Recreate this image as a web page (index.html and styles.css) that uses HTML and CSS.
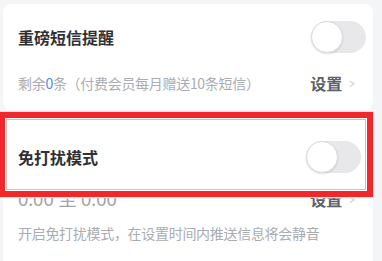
FILE: index.html
```html
<!DOCTYPE html>
<html lang="zh-CN">
<head>
<meta charset="utf-8">
<link rel="stylesheet" href="styles.css">
</head>
<body>
<div class="page">
  <section class="card card-sms">
    <div class="row row-main">
      <span class="title">重磅短信提醒</span>
      <span class="switch"><span class="knob"></span></span>
    </div>
    <div class="row row-sub">
      <span class="note">剩余<span class="blue">0</span>条（付费会员每月赠送10条短信）</span>
      <span class="link">设置<span class="chev">&gt;</span></span>
    </div>
  </section>
  <section class="card card-dnd">
    <div class="row row-main">
      <span class="title">免打扰模式</span>
      <span class="switch"><span class="knob"></span></span>
    </div>
    <div class="row row-time">
      <span class="time">0:00 至 0:00</span>
      <span class="link">设置<span class="chev">&gt;</span></span>
    </div>
    <div class="row row-desc">
      <span class="note">开启免打扰模式，在设置时间内推送信息将会静音</span>
    </div>
  </section>
  <div class="highlight"></div>
</div>
</body>
</html>
```

FILE: styles.css
```css
html, body {
  margin: 0;
  padding: 0;
  background: #f4f5f7;
  width: 382px;
  height: 261px;
  overflow: hidden;
  font-family: "Noto Sans CJK SC", "Noto Sans", sans-serif;
}
.page {
  position: relative;
  padding: 4px 9px 0 3px;
  display: flex;
  flex-direction: column;
  gap: 3px;
}
.card {
  background: #fff;
  border-radius: 8px;
  padding: 17px 7px 17px 15px;
  display: flex;
  flex-direction: column;
}
.card-dnd {
  padding: 28px 12px 30px 15px;
  border-radius: 8px 8px 0 0;
}
.row {
  display: flex;
  align-items: center;
  justify-content: space-between;
}
.row-main {
  height: 32px;
}
.title {
  font-size: 16px;
  font-weight: 700;
  color: #2f3033;
  line-height: 20px;
}
.switch {
  width: 55px;
  height: 32px;
  border-radius: 16px;
  background: #e8e8ea;
  display: flex;
  align-items: center;
}
.knob {
  width: 30px;
  height: 30px;
  border-radius: 50%;
  background: #fff;
  border: 1px solid #dcdcdf;
  box-shadow: 0 1px 2px rgba(0,0,0,0.12);
}
.row-sub {
  margin-top: 20px;
  height: 20px;
  padding-right: 10px;
}
.note {
  font-size: 14px;
  line-height: 20px;
  color: #a9acb1;
  letter-spacing: -0.3px;
}
.blue {
  color: #4a8ee6;
}
.link {
  font-size: 16px;
  font-weight: 600;
  color: #5d6066;
  line-height: 20px;
  display: flex;
  align-items: center;
}
.chev {
  font-weight: 400;
  color: #c8cacd;
  font-size: 14px;
  margin-left: 6px;
  transform: scaleX(0.7);
}
.row-time {
  margin-top: 14px;
  height: 24px;
  padding-right: 5px;
}
.time {
  font-family: "Noto Sans", "Noto Sans CJK SC", sans-serif;
  font-size: 18px;
  line-height: 24px;
  color: #a0a3a8;
}
.row-desc {
  margin-top: 12px;
  height: 20px;
}
.highlight {
  position: absolute;
  left: -1px;
  top: 112px;
  width: 374px;
  height: 85px;
  box-sizing: border-box;
  border: 6px solid #f0282b;
  box-shadow: inset 0 0 0 1px #ffffff, inset 0 0 0 2px #c4c4c4, 0 0 0 1px #e6e6e6;
}
```
